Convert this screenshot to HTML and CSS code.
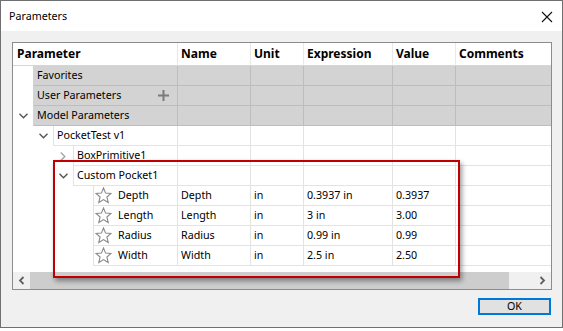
FILE: index.html
```html
<!DOCTYPE html>
<html>

<head>
    <meta charset="utf-8">
    <title>Parameters</title>
    <link rel="stylesheet" href="styles.css">
</head>

<body>
    <div class="window">
        <div class="titlebar">
            <span class="title">Parameters</span>
            <svg class="close" width="12" height="12" viewBox="0 0 12 12">
                <path d="M1 1 L11 11 M11 1 L1 11" stroke="#111" stroke-width="1.1" fill="none" />
            </svg>
        </div>

        <div class="body">
            <div class="frame">
                <div class="list">
                    <div class="row head">
                        <div class="c1"><div class="cell">Parameter</div></div>
                        <div class="cell">Name</div>
                        <div class="cell">Unit</div>
                        <div class="cell">Expression</div>
                        <div class="cell">Value</div>
                        <div class="cell">Comments</div>
                    </div>

                    <div class="row group">
                        <div class="c1"><div class="indent i0"></div><div class="cell">Favorites</div></div>
                        <div class="cell"></div><div class="cell"></div><div class="cell"></div><div class="cell"></div><div class="cell"></div>
                    </div>
                    <div class="row group">
                        <div class="c1"><div class="indent i0"></div>
                            <div class="cell plusCell">User Parameters
                                <svg class="plus" width="11" height="11" viewBox="0 0 11 11">
                                    <path d="M5.5 0 V11 M0 5.5 H11" stroke="#7b7b7b" stroke-width="2" fill="none" />
                                </svg>
                            </div>
                        </div>
                        <div class="cell"></div><div class="cell"></div><div class="cell"></div><div class="cell"></div><div class="cell"></div>
                    </div>
                    <div class="row group">
                        <div class="c1"><div class="indent i0"><svg class="down" width="9" height="6" viewBox="0 0 9 6"><path d="M0.5 0.8 L4.5 4.8 L8.5 0.8" stroke="#555" stroke-width="1.4" fill="none" /></svg></div><div class="cell">Model Parameters</div></div>
                        <div class="cell"></div><div class="cell"></div><div class="cell"></div><div class="cell"></div><div class="cell"></div>
                    </div>

                    <div class="row">
                        <div class="c1"><div class="indent i1"><svg class="down" width="9" height="6" viewBox="0 0 9 6"><path d="M0.5 0.8 L4.5 4.8 L8.5 0.8" stroke="#555" stroke-width="1.4" fill="none" /></svg></div><div class="cell">PocketTest v1</div></div>
                        <div class="cell"></div><div class="cell"></div><div class="cell"></div><div class="cell"></div><div class="cell"></div>
                    </div>
                    <div class="row">
                        <div class="c1"><div class="indent i2"><svg class="right" width="6" height="9" viewBox="0 0 6 9"><path d="M0.8 0.5 L4.8 4.5 L0.8 8.5" stroke="#a6a6a6" stroke-width="1.4" fill="none" /></svg></div><div class="cell">BoxPrimitive1</div></div>
                        <div class="cell"></div><div class="cell"></div><div class="cell"></div><div class="cell"></div><div class="cell"></div>
                    </div>
                    <div class="row">
                        <div class="c1"><div class="indent i2"><svg class="down" width="9" height="6" viewBox="0 0 9 6"><path d="M0.5 0.8 L4.5 4.8 L8.5 0.8" stroke="#555" stroke-width="1.4" fill="none" /></svg></div><div class="cell">Custom Pocket1</div></div>
                        <div class="cell"></div><div class="cell"></div><div class="cell"></div><div class="cell"></div><div class="cell"></div>
                    </div>

                    <div class="row">
                        <div class="c1"><div class="indent i3"></div><div class="cell param"><svg class="star" width="17" height="17" viewBox="0 0 17 17"><path d="M8.5 1 L10.6 6.1 L16 6.5 L11.9 10 L13.2 15.5 L8.5 12.6 L3.8 15.5 L5.1 10 L1 6.5 L6.4 6.1 Z" stroke="#8a8a8a" stroke-width="1.1" fill="none" stroke-linejoin="miter" /></svg>Depth</div></div>
                        <div class="cell">Depth</div><div class="cell">in</div><div class="cell">0.3937 in</div><div class="cell">0.3937</div><div class="cell"></div>
                    </div>
                    <div class="row">
                        <div class="c1"><div class="indent i3"></div><div class="cell param"><svg class="star" width="17" height="17" viewBox="0 0 17 17"><path d="M8.5 1 L10.6 6.1 L16 6.5 L11.9 10 L13.2 15.5 L8.5 12.6 L3.8 15.5 L5.1 10 L1 6.5 L6.4 6.1 Z" stroke="#8a8a8a" stroke-width="1.1" fill="none" /></svg>Length</div></div>
                        <div class="cell">Length</div><div class="cell">in</div><div class="cell">3 in</div><div class="cell">3.00</div><div class="cell"></div>
                    </div>
                    <div class="row">
                        <div class="c1"><div class="indent i3"></div><div class="cell param"><svg class="star" width="17" height="17" viewBox="0 0 17 17"><path d="M8.5 1 L10.6 6.1 L16 6.5 L11.9 10 L13.2 15.5 L8.5 12.6 L3.8 15.5 L5.1 10 L1 6.5 L6.4 6.1 Z" stroke="#8a8a8a" stroke-width="1.1" fill="none" /></svg>Radius</div></div>
                        <div class="cell">Radius</div><div class="cell">in</div><div class="cell">0.99 in</div><div class="cell">0.99</div><div class="cell"></div>
                    </div>
                    <div class="row">
                        <div class="c1"><div class="indent i3"></div><div class="cell param"><svg class="star" width="17" height="17" viewBox="0 0 17 17"><path d="M8.5 1 L10.6 6.1 L16 6.5 L11.9 10 L13.2 15.5 L8.5 12.6 L3.8 15.5 L5.1 10 L1 6.5 L6.4 6.1 Z" stroke="#8a8a8a" stroke-width="1.1" fill="none" /></svg>Width</div></div>
                        <div class="cell">Width</div><div class="cell">in</div><div class="cell">2.5 in</div><div class="cell">2.50</div><div class="cell"></div>
                    </div>
                </div>

                <div class="hscroll">
                    <div class="arrow"><svg width="7" height="9" viewBox="0 0 7 9"><path d="M5.5 1 L2 4.5 L5.5 8" stroke="#606060" stroke-width="1.8" fill="none" /></svg></div>
                    <div class="track"><div class="thumb"></div></div>
                    <div class="arrow"><svg width="7" height="9" viewBox="0 0 7 9"><path d="M1.5 1 L5 4.5 L1.5 8" stroke="#606060" stroke-width="1.8" fill="none" /></svg></div>
                </div>

                <!-- callout drawn over the list -->
                <div class="callout"></div>
            </div>

            <div class="footer">
                <button class="ok">OK</button>
            </div>
        </div>
    </div>
</body>

</html>
```

FILE: styles.css
```css
body {
    margin: 0;
    padding: 0;
    background-color: white;
    font-family: "Noto Sans", "Liberation Sans", sans-serif;
    font-size: 10.7px;
    color: black;
}

.window {
    width: 563px;
    height: 328px;
    box-sizing: border-box;
    border: 1px solid #707070;
    display: flex;
    flex-direction: column;
}

.titlebar {
    height: 30px;
    background-color: white;
    display: flex;
    align-items: center;
    justify-content: space-between;
    padding: 0 9px 0 8px;
}

.title {
    font-size: 10.7px;
}

.close {
    margin-top: 1px;
}

.body {
    flex: 1;
    background-color: #f0f0f0;
    padding: 11px 0 0 11px;
}

.frame {
    position: relative;
    width: 540px;
    height: 248px;
    box-sizing: border-box;
    border: 1px solid #8c8c8c;
    background-color: white;
}

.list {
    height: 229px;
}

.row {
    display: grid;
    grid-template-columns: 164px 73px 53px 89px 63px 96px;
    height: 20px;
}

.cell {
    border-left: 1px solid #e3e3e3;
    border-bottom: 1px solid #e3e3e3;
    padding-left: 3px;
    line-height: 19px;
    white-space: nowrap;
    overflow: hidden;
}

.c1 {
    display: flex;
}

.c1 .cell {
    flex: 1;
}

.indent {
    display: flex;
    justify-content: center;
    align-items: center;
}

.i0 {
    width: 20px;
}

.i1 {
    width: 20px;
    margin-left: 20px;
}

.i2 {
    width: 20px;
    margin-left: 40px;
}

.i3 {
    width: 80px;
}

/* header */
.head {
    height: 23px;
}

.head .cell {
    font-weight: bold;
    font-size: 12px;
    line-height: 22px;
    border-left-color: #e8e8e8;
    border-bottom-color: #d5d5d5;
}

.head .c1 .cell {
    border-left: none;
    padding-left: 4px;
}

/* grey group rows */
.group .cell {
    background-color: #d3d3d3;
    border-color: #bdbdbd;
}

.group .c1 .cell {
    border-left-color: #d3d3d3;
}

.plusCell {
    display: flex;
    align-items: center;
}

.plus {
    margin-left: 37px;
}

.param {
    display: flex;
    align-items: center;
    padding-left: 1px;
}

.star {
    margin-right: 6px;
}

/* horizontal scrollbar */
.hscroll {
    height: 17px;
    display: flex;
    background-color: #f0f0f0;
}

.arrow {
    width: 17px;
    display: flex;
    justify-content: center;
    align-items: center;
}

.track {
    flex: 1;
}

.thumb {
    width: 479px;
    height: 17px;
    background-color: #cdcdcd;
}

.callout {
    position: absolute;
    left: 40px;
    top: 117px;
    width: 407px;
    height: 118px;
    box-sizing: border-box;
    border: 2px solid #c00000;
    box-shadow: 2px 3px 5px rgba(0, 0, 0, 0.4);
}

.footer {
    display: flex;
    justify-content: flex-end;
    padding: 8px 11px 0 0;
}

.ok {
    width: 73px;
    height: 17px;
    box-sizing: border-box;
    border: 2px solid #0078d7;
    background-color: #e1e1e1;
    font-family: "Noto Sans", "Liberation Sans", sans-serif;
    font-size: 10.7px;
    padding: 0;
    line-height: 13px;
}
```
